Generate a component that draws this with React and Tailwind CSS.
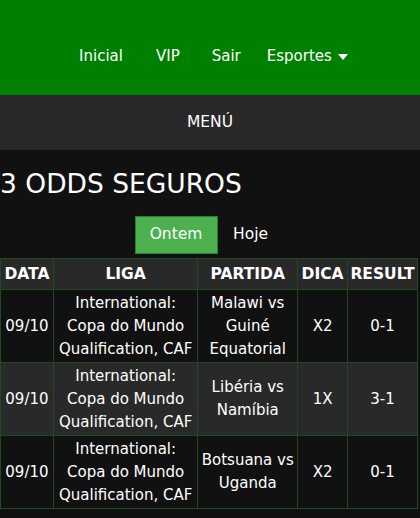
export default function App() {
  const rows = [
    { d: "09/10", l: ["International:", "Copa do Mundo", "Qualification, CAF"], p: ["Malawi vs", "Guiné", "Equatorial"], t: "X2", r: "0-1", bg: "bg-[#111111]" },
    { d: "09/10", l: ["International:", "Copa do Mundo", "Qualification, CAF"], p: ["Libéria vs", "Namíbia"], t: "1X", r: "3-1", bg: "bg-[#292929]" },
    { d: "09/10", l: ["International:", "Copa do Mundo", "Qualification, CAF"], p: ["Botsuana vs", "Uganda"], t: "X2", r: "0-1", bg: "bg-[#111111]" },
  ];
  const font = { fontFamily: '"DejaVu Sans", sans-serif' };
  return (
    <div className="w-[420px] h-[518px] bg-[#111111] text-white overflow-hidden" style={font}>
      <div className="h-[95px] bg-[#008000] flex items-center justify-center pt-[18px] text-[15px]">
        <div className="flex items-center ml-[7px]">
          <span>Inicial</span>
          <span className="ml-[33px]">VIP</span>
          <span className="ml-[32px]">Sair</span>
          <span className="ml-[26px] flex items-center gap-[6px]">Esportes
            <svg width="10" height="6" viewBox="0 0 10 6"><path d="M0 0h10L5 6z" fill="white" /></svg>
          </span>
        </div>
      </div>
      <div className="h-[55px] bg-[#292929] flex items-center justify-center text-[15.5px]">MENÚ</div>
      <div className="pt-[18px] text-[26.5px] leading-[32px]">3 ODDS SEGUROS</div>
      <div className="flex justify-center mt-[16px] ml-[-2px]">
        <div className="w-[83px] h-[38px] bg-[#4CAF50] border border-[#2e7d32] flex items-center justify-center text-[15.5px]">Ontem</div>
        <div className="w-[66px] h-[38px] flex items-center justify-center text-[15.5px]">Hoje</div>
      </div>
      <table className="mt-[4px] w-[418px] border-collapse text-[15px] leading-[23px]">
        <thead>
          <tr className="bg-[#292929] h-[31px]">
            {["DATA", "LIGA", "PARTIDA", "DICA", "RESULT"].map((h, i) => (
              <th key={h} className={"border border-[#1f4a1f] font-bold text-[15.5px] px-0 " + ["w-[53px]", "w-[145px]", "w-[100px]", "w-[50px]", "w-[70px]"][i]}>{h}</th>
            ))}
          </tr>
        </thead>
        <tbody>
          {rows.map((r, i) => (
            <tr key={i} className={r.bg + " h-[73px]"}>
              <td className="border border-[#1f4a1f] text-center">{r.d}</td>
              <td className="border border-[#1f4a1f] text-center">{r.l.map((x) => <div key={x}>{x}</div>)}</td>
              <td className="border border-[#1f4a1f] text-center">{r.p.map((x) => <div key={x}>{x}</div>)}</td>
              <td className="border border-[#1f4a1f] text-center">{r.t}</td>
              <td className="border border-[#1f4a1f] text-center">{r.r}</td>
            </tr>
          ))}
        </tbody>
      </table>
    </div>
  );
}
